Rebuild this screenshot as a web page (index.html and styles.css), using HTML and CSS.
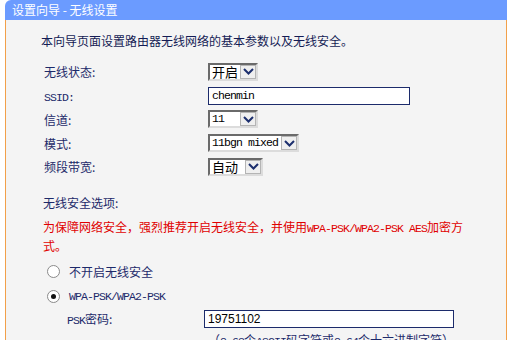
FILE: index.html
```html
<!DOCTYPE html>
<html lang="zh-CN">
<head>
  <meta charset="UTF-8">
  <title>设置向导 - 无线设置</title>
  <link rel="stylesheet" href="styles.css">
</head>
<body>
  <div class="wizard">
    <div class="title">设置向导 - 无线设置</div>

    <div class="panel">
      <p class="intro">本向导页面设置路由器无线网络的基本参数以及无线安全。</p>

      <div class="form">
        <div class="row">
          <label>无线状态:</label>
          <span class="sel w50"><span class="val">开启</span><span class="btn"><svg width="11" height="7" viewBox="0 0 11 7"><path d="M1 1l4.5 4.5L10 1" fill="none" stroke="#1c2f6e" stroke-width="2"/></svg></span></span>
        </div>
        <div class="row">
          <label><span class="en">SSID:</span></label>
          <input type="text" class="txt ssid en" value="chenmin">
        </div>
        <div class="row">
          <label>信道:</label>
          <span class="sel w50"><span class="val en">11</span><span class="btn"><svg width="11" height="7" viewBox="0 0 11 7"><path d="M1 1l4.5 4.5L10 1" fill="none" stroke="#1c2f6e" stroke-width="2"/></svg></span></span>
        </div>
        <div class="row">
          <label>模式:</label>
          <span class="sel w91"><span class="val en">11bgn mixed</span><span class="btn"><svg width="11" height="7" viewBox="0 0 11 7"><path d="M1 1l4.5 4.5L10 1" fill="none" stroke="#1c2f6e" stroke-width="2"/></svg></span></span>
        </div>
        <div class="row">
          <label>频段带宽:</label>
          <span class="sel w55"><span class="val">自动</span><span class="btn"><svg width="11" height="7" viewBox="0 0 11 7"><path d="M1 1l4.5 4.5L10 1" fill="none" stroke="#1c2f6e" stroke-width="2"/></svg></span></span>
        </div>
      </div>

      <div class="security">
        <div class="sec-title">无线安全选项:</div>
        <p class="warn">为保障网络安全，强烈推荐开启无线安全，并使用<span class="en">WPA-PSK/WPA2-PSK AES</span>加密方式。</p>

        <div class="radio-row">
          <input type="radio" name="sec" id="sec_off">
          <label for="sec_off">不开启无线安全</label>
        </div>
        <div class="radio-row">
          <input type="radio" name="sec" id="sec_wpa" checked>
          <label for="sec_wpa" class="en">WPA-PSK/WPA2-PSK</label>
        </div>
        <div class="psk-row">
          <label><span class="en">PSK</span>密码:</label>
          <input type="text" class="txt psk" value="19751102">
        </div>
        <div class="hint">（<span class="en">8-63</span>个<span class="en">ASCII</span>码字符或<span class="en">8-64</span>个十六进制字符）</div>
      </div>
    </div>
  </div>
</body>
</html>
```

FILE: styles.css
```css
body {
  margin: 0;
  background: #fff;
  font-family: "Noto Sans CJK SC", sans-serif;
  font-size: 12px;
  color: #1d2a6a;
}
.en {
  font-family: "Liberation Mono", "Noto Sans CJK SC", monospace;
  font-size: 11.5px;
  letter-spacing: -0.9px;
}
.wizard {
  width: 502px;
  margin-left: 5px;
}
.title {
  height: 20px;
  line-height: 20px;
  padding-left: 7px;
  background: #6b9bff;
  border-top-left-radius: 6px;
  color: #fff;
  font-size: 12px;
}
.panel {
  height: 320px;
  padding: 12px 0 0 35px;
  background: #f4f4f4;
  border-left: 1px solid #f2a04a;
  border-right: 1px solid #f2a04a;
  color: #1d2a6a;
}
.intro {
  margin: 0;
  line-height: 18px;
  color: #141c55;
}
.form {
  margin-top: 10px;
}
.row {
  display: flex;
  align-items: center;
  height: 23.75px;
}
.row label {
  width: 164px;
  padding-left: 3px;
}
.sel {
  display: inline-flex;
  box-sizing: border-box;
  height: 18px;
  border: 2px solid;
  border-color: #6a6a6a #dcdcdc #dcdcdc #6a6a6a;
  background: #fff;
}
.w50 { width: 50px; }
.w55 { width: 55px; }
.w91 { width: 91px; }
.sel .val {
  flex: 1;
  padding-left: 2px;
  line-height: 14px;
  font-size: 13px;
  color: #000;
  white-space: nowrap;
}
.sel .val.en {
  font-size: 11.5px;
}
.sel .btn {
  width: 16px;
  display: flex;
  align-items: center;
  justify-content: center;
  background: #efefef;
  border: 1px solid #b4b4b4;
  box-sizing: border-box;
}
.txt {
  box-sizing: border-box;
  height: 18px;
  margin: 0;
  padding: 0 0 0 3px;
  border: 1px solid #1c2b6b;
  background: #fff;
  color: #000;
  outline: none;
}
.ssid {
  width: 202px;
}
.psk {
  width: 250px;
  font-family: "Liberation Sans", sans-serif;
  font-size: 12px;
}
.security {
  margin-top: 15px;
  padding-left: 2px;
}
.sec-title {
  line-height: 17px;
}
.warn {
  width: 425px;
  margin: 7px 0 5px;
  line-height: 17px;
  color: #e00000;
}
.radio-row {
  display: flex;
  align-items: center;
  height: 25px;
}
.radio-row input {
  appearance: none;
  box-sizing: border-box;
  width: 13px;
  height: 13px;
  margin: 0 9px 0 4px;
  border: 1px solid #8a8a8a;
  border-radius: 50%;
  background: #fff;
  display: grid;
  place-content: center;
}
.radio-row input:checked::after {
  content: "";
  width: 5px;
  height: 5px;
  border-radius: 50%;
  background: #111;
}
.psk-row {
  display: flex;
  align-items: center;
  height: 20px;
  padding-left: 24px;
}
.psk-row label {
  width: 137px;
}
.hint {
  margin-top: 2px;
  padding-left: 165px;
  line-height: 17px;
}
```
